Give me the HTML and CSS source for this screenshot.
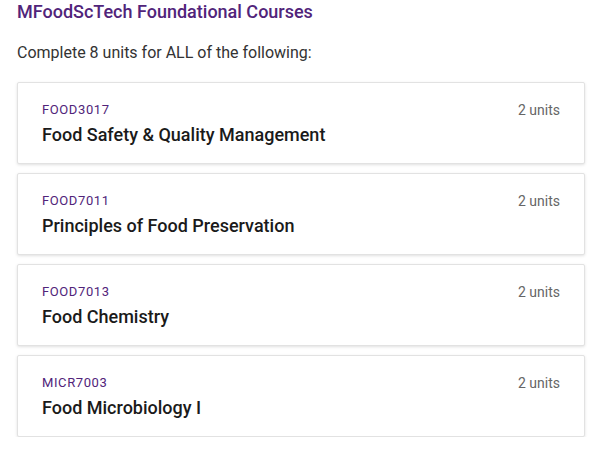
FILE: index.html
```html
<!DOCTYPE html>
<html lang="en">
<head>
  <meta charset="UTF-8">
  <meta name="viewport" content="width=device-width, initial-scale=1.0">
  <title>MFoodScTech Foundational Courses</title>
  <link rel="stylesheet" href="styles.css">
</head>
<body>
  <section class="group">
    <h2 class="group-title">MFoodScTech Foundational Courses</h2>
    <p class="group-rule">Complete 8 units for ALL of the following:</p>

    <div class="course-list">
      <div class="course">
        <div class="course-info">
          <div class="course-code">FOOD3017</div>
          <div class="course-name">Food Safety &amp; Quality Management</div>
        </div>
        <div class="course-units">2 units</div>
      </div>
      <div class="course">
        <div class="course-info">
          <div class="course-code">FOOD7011</div>
          <div class="course-name">Principles of Food Preservation</div>
        </div>
        <div class="course-units">2 units</div>
      </div>
      <div class="course">
        <div class="course-info">
          <div class="course-code">FOOD7013</div>
          <div class="course-name">Food Chemistry</div>
        </div>
        <div class="course-units">2 units</div>
      </div>
      <div class="course">
        <div class="course-info">
          <div class="course-code">MICR7003</div>
          <div class="course-name">Food Microbiology I</div>
        </div>
        <div class="course-units">2 units</div>
      </div>
    </div>
  </section>
</body>
</html>
```

FILE: styles.css
```css
body { font-family: Roboto, "Liberation Sans", sans-serif; background: #fff; margin: 0; padding: 0 20px 0 17px; color: #333; }
.group-title { font-size: 18px; font-weight: 500; color: #51247a; margin: 0; line-height: 24px; }
.group-rule { font-size: 16px; margin: 19px 0 0; line-height: 20px; color: #333; }
.course-list { display: flex; flex-direction: column; gap: 9px; margin-top: 19px; }
.course { display: flex; justify-content: space-between; align-items: flex-start; height: 82px; box-sizing: border-box; padding: 19px 24px 0; border: 1px solid #e2e2e2; border-radius: 2px; box-shadow: 0 1px 3px rgba(0,0,0,0.12); background: #fff; }
.course-code { font-size: 13px; color: #51247a; line-height: 16px; letter-spacing: 0.6px; }
.course-name { font-size: 18px; font-weight: 500; color: #1a1a1a; line-height: 22px; margin-top: 6px; }
.course-units { font-size: 14px; color: #666; line-height: 16px; }
```
